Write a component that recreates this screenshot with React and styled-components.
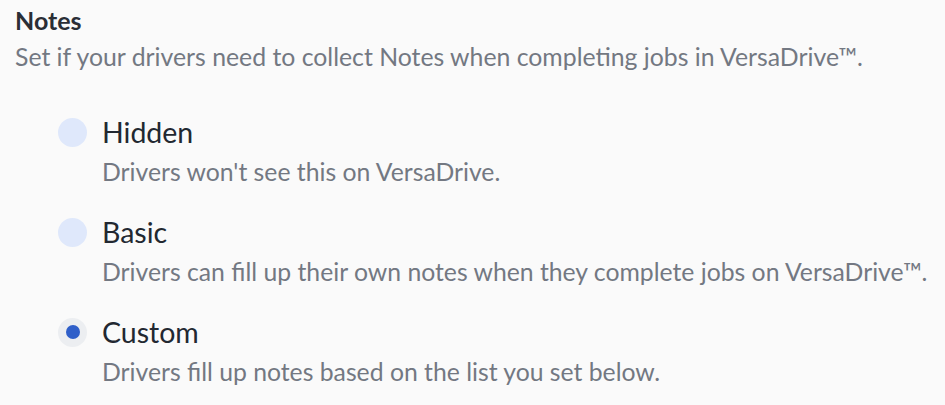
import React from "react";
import styled, { createGlobalStyle } from "styled-components";

const GlobalStyle = createGlobalStyle`
  html, body {
    margin: 0;
    padding: 0;
    background: #fafafa;
    font-family: Lato, "Open Sans", sans-serif;
  }
`;

const options = [
  { id: "hidden", label: "Hidden", sub: "Drivers won't see this on VersaDrive." },
  {
    id: "basic",
    label: "Basic",
    sub: "Drivers can fill up their own notes when they complete jobs on VersaDrive™.",
  },
  { id: "custom", label: "Custom", sub: "Drivers fill up notes based on the list you set below." },
];

const App = () => {
  const selected = "custom";

  return (
    <>
      <GlobalStyle />
      <Section>
        <Title>Notes</Title>
        <Desc>Set if your drivers need to collect Notes when completing jobs in VersaDrive™.</Desc>
        <OptionList>
          {options.map((o) => (
            <Option key={o.id}>
              <Radio checked={selected === o.id} />
              <OptionText>
                <Label>{o.label}</Label>
                <Sub>{o.sub}</Sub>
              </OptionText>
            </Option>
          ))}
        </OptionList>
      </Section>
    </>
  );
};

const Section = styled.div`
  padding: 6px 15px 0 15px;
`;

const Title = styled.div`
  font-size: 25px;
  font-weight: 700;
  color: #2a2e36;
  line-height: 28px;
`;

const Desc = styled.div`
  font-size: 24.8px;
  color: #737882;
  line-height: 34px;
  margin-top: 6px;
  white-space: nowrap;
`;

const OptionList = styled.div`
  display: flex;
  flex-direction: column;
  gap: 23px;
  margin-top: 38px;
  padding-left: 43px;
`;

const Option = styled.div`
  display: flex;
  align-items: flex-start;
  gap: 15px;
`;

const Radio = styled.div`
  width: 29px;
  height: 29px;
  border-radius: 50%;
  flex-shrink: 0;
  margin-top: 5.5px;
  display: flex;
  align-items: center;
  justify-content: center;
  background: ${(props) => (props.checked ? "#eceef1" : "#dfe8fb")};

  &::after {
    content: "";
    width: 14px;
    height: 14px;
    border-radius: 50%;
    background: #2f5fc9;
    display: ${(props) => (props.checked ? "block" : "none")};
  }
`;

const OptionText = styled.div`
  display: flex;
  flex-direction: column;
  gap: 3px;
`;

const Label = styled.div`
  font-size: 28.5px;
  color: #222831;
  line-height: 40px;
`;

const Sub = styled.div`
  font-size: 24.75px;
  color: #737882;
  line-height: 34px;
  white-space: nowrap;
`;

export default App;
